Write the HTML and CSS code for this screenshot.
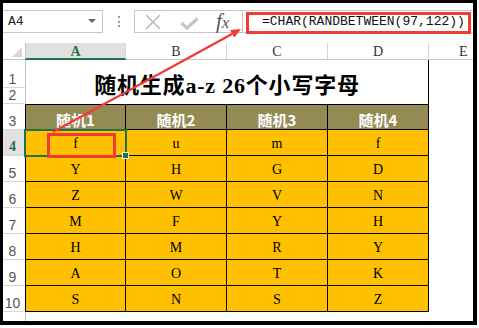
FILE: index.html
```html
<!DOCTYPE html>
<html lang="zh">
<head>
    <meta charset="UTF-8">
    <title>随机生成a-z 26个小写字母</title>
    <link rel="stylesheet" href="styles.css">
</head>
<body>
    <div class="frame">
        <div class="fbar">
            <div class="namebox">
                <span class="ref">A4</span>
                <span class="caret"></span>
            </div>
            <div class="grip"><span></span></div>
            <div class="icons">
                <svg class="ico-x" width="16" height="16" viewBox="0 0 16 16">
                    <path d="M1 1 L15 15 M15 1 L1 15" stroke="#bcbcbc" stroke-width="1.6" fill="none"/>
                </svg>
                <svg class="ico-ok" width="19" height="13" viewBox="0 0 19 13">
                    <path d="M1.5 6 L7 11 L17.5 1.5" stroke="#c4c4c4" stroke-width="3.2" fill="none"/>
                </svg>
                <span class="fx">f<span>x</span></span>
            </div>
            <div class="formula">=CHAR(RANDBETWEEN(97,122))</div>
        </div>

        <div class="sheet">
            <div class="corner"><span></span></div>
            <div class="ch active">A</div>
            <div class="ch">B</div>
            <div class="ch">C</div>
            <div class="ch">D</div>
            <div class="ch e">E</div>

            <div class="rh">1</div>
            <div class="title">随机生成a-z 26个小写字母</div>
            <div class="ec"></div>
            <div class="rh">2</div>
            <div class="ec"></div>

            <div class="rh">3</div>
            <div class="th first">随机1</div>
            <div class="th">随机2</div>
            <div class="th">随机3</div>
            <div class="th">随机4</div>
            <div class="ec"></div>

            <div class="rh sel">4</div>
            <div class="td first cur">f</div>
            <div class="td">u</div>
            <div class="td">m</div>
            <div class="td">f</div>
            <div class="ec"></div>

            <div class="rh">5</div>
            <div class="td first">Y</div>
            <div class="td">H</div>
            <div class="td">G</div>
            <div class="td">D</div>
            <div class="ec"></div>

            <div class="rh">6</div>
            <div class="td first">Z</div>
            <div class="td">W</div>
            <div class="td">V</div>
            <div class="td">N</div>
            <div class="ec"></div>

            <div class="rh">7</div>
            <div class="td first">M</div>
            <div class="td">F</div>
            <div class="td">Y</div>
            <div class="td">H</div>
            <div class="ec"></div>

            <div class="rh">8</div>
            <div class="td first">H</div>
            <div class="td">M</div>
            <div class="td">R</div>
            <div class="td">Y</div>
            <div class="ec"></div>

            <div class="rh">9</div>
            <div class="td first">A</div>
            <div class="td">O</div>
            <div class="td">T</div>
            <div class="td">K</div>
            <div class="ec"></div>

            <div class="rh">10</div>
            <div class="td first">S</div>
            <div class="td">N</div>
            <div class="td">S</div>
            <div class="td">Z</div>
            <div class="ec"></div>

            <div class="rh last"></div>
            <div class="rest"></div>
        </div>
    </div>

    <!-- red annotations drawn over the screenshot -->
    <svg class="marks" width="479" height="328" viewBox="0 0 479 328">
        <rect x="48.5" y="134.5" width="66" height="22" fill="none" stroke="#ef3a35" stroke-width="3"/>
        <rect x="247.5" y="13.5" width="222" height="19" fill="none" stroke="#ef3a35" stroke-width="3"/>
        <line x1="53" y1="132" x2="232.5" y2="33.8" stroke="#ef3a35" stroke-width="2.2"/>
        <polygon points="241,29 234.4,37.6 230.1,30" fill="#ef3a35"/>
    </svg>
</body>
</html>
```

FILE: styles.css
```css
body {
    margin: 0;
    background: #fff;
    position: relative;
    font-family: "Liberation Mono", monospace;
}
.frame {
    width: 477px;
    height: 325px;
    box-sizing: border-box;
    border: solid #000;
    border-width: 3px 4px 4px 3px;
    background: #fff;
    overflow: hidden;
}

/* formula bar */
.fbar {
    height: 40px;
    box-sizing: border-box;
    padding-top: 7px;
    display: flex;
    align-items: flex-start;
}
.namebox {
    width: 100px;
    height: 23px;
    box-sizing: border-box;
    border: 1px solid #c6c6c6;
    border-left: none;
    display: flex;
    align-items: center;
    justify-content: space-between;
    padding: 0 6px 0 5px;
    font-size: 13px;
    color: #222;
}
.caret {
    width: 0;
    height: 0;
    border-left: 4px solid transparent;
    border-right: 4px solid transparent;
    border-top: 4px solid #666;
    margin-top: -2px;
}
.grip {
    width: 31px;
    height: 23px;
    display: flex;
    align-items: center;
    justify-content: center;
}
.grip span {
    width: 0;
    height: 11px;
    border-left: 2px dotted #9a9a9a;
}
.icons {
    width: 109px;
    height: 23px;
    box-sizing: border-box;
    border: 1px solid #c6c6c6;
    display: flex;
    align-items: center;
}
.ico-x {
    margin-left: 10px;
}
.ico-ok {
    margin-left: 19px;
    margin-top: 3px;
}
.fx {
    margin-left: 17px;
    font-family: "Liberation Serif", serif;
    font-style: italic;
    font-size: 21px;
    color: #555;
    line-height: 20px;
}
.fx span {
    font-size: 17px;
}
.formula {
    flex: 1;
    height: 23px;
    box-sizing: border-box;
    border-top: 1px solid #c6c6c6;
    border-bottom: 1px solid #c6c6c6;
    padding-left: 19px;
    font-size: 13px;
    line-height: 21px;
    color: #111;
    white-space: nowrap;
}

/* sheet grid */
.sheet {
    display: grid;
    grid-template-columns: 22px repeat(4, 101px) 1fr;
    grid-template-rows: 17px 28px 16px repeat(8, 26px) 1fr;
    height: 278px;
}
.sheet > div {
    box-sizing: border-box;
}
.corner {
    display: flex;
    align-items: flex-end;
    justify-content: flex-end;
    padding: 0 3px 2px 0;
    border-bottom: 1px solid #c6c6c6;
}
.corner span {
    width: 0;
    height: 0;
    border-left: 10px solid transparent;
    border-bottom: 10px solid #d6d6d6;
}
.ch {
    border-right: 1px solid #d4d4d4;
    border-bottom: 1px solid #c6c6c6;
    text-align: center;
    font-family: "Liberation Serif", serif;
    font-size: 14px;
    line-height: 18px;
    color: #333;
}
.ch.active {
    background: #e1e1e1;
    border-bottom: 2px solid #217346;
    border-left: 1px solid #c6c6c6;
    color: #217346;
    font-weight: bold;
}
.ch.e {
    border-right: none;
    text-align: left;
    padding-left: 30px;
}
.rh {
    border-bottom: 1px solid #d8d8d8;
    font-family: "Liberation Sans", sans-serif;
    font-size: 14px;
    color: #555;
    display: flex;
    align-items: flex-end;
    justify-content: center;
    padding-right: 3px;
    line-height: 16px;
}
.rh.sel {
    background: #e1e1e1;
    color: #217346;
    font-family: "Liberation Serif", serif;
    font-weight: bold;
}
.rh.last {
    border-bottom: none;
}
.title {
    grid-column: span 4;
    grid-row: span 2;
    border-left: 1px solid #c6c6c6;
    border-right: 1px solid #000;
    display: flex;
    align-items: center;
    justify-content: center;
    font-family: "Liberation Serif", "Noto Sans CJK SC", serif;
    font-weight: bold;
    font-size: 22px;
    letter-spacing: 0.8px;
    color: #000;
    padding-top: 1px;
}
.th {
    background: #948a54;
    border-top: 1px solid #000;
    border-right: 1px solid #000;
    border-bottom: 1px solid #000;
    color: #fff;
    font-family: "Noto Sans CJK SC", sans-serif;
    font-weight: bold;
    font-size: 15px;
    display: flex;
    align-items: center;
    justify-content: center;
    padding-top: 4px;
}
.td {
    background: #ffc000;
    border-right: 1px solid #000;
    border-bottom: 1px solid #000;
    color: #000;
    font-family: "Liberation Serif", serif;
    font-size: 14px;
    display: flex;
    align-items: center;
    justify-content: center;
    padding-top: 2px;
}
.first {
    border-left: 1px solid #000;
}
.td.cur {
    position: relative;
    outline: 2px solid #217346;
    outline-offset: -1px;
}
.td.cur::after {
    content: "";
    position: absolute;
    right: -4px;
    bottom: -4px;
    width: 5px;
    height: 5px;
    background: #217346;
    border: 1px solid #fff;
    z-index: 2;
}
.rest {
    grid-column: span 5;
    border-left: 1px solid #c6c6c6;
}
.marks {
    position: absolute;
    top: 0;
    left: 0;
    pointer-events: none;
}
```
